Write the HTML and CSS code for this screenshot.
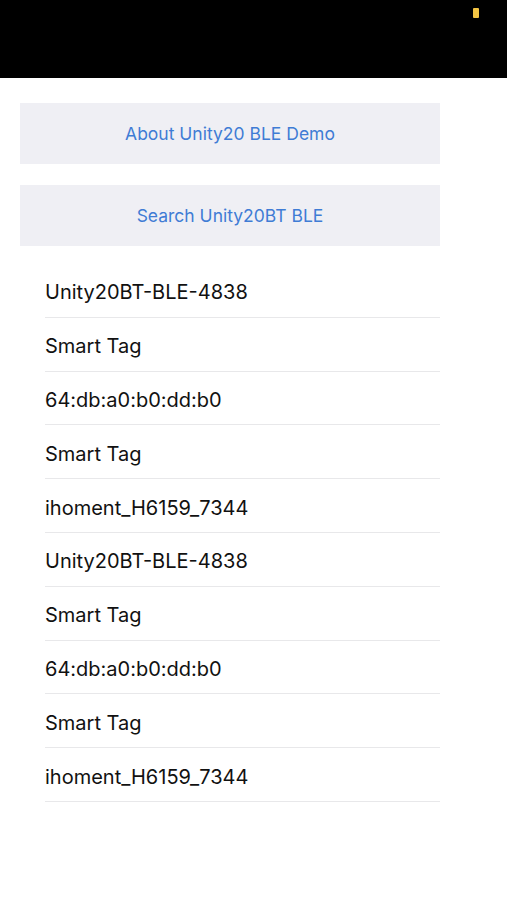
FILE: index.html
```html
<!DOCTYPE html>
<html lang="en">
<head>
    <title>Unity20 BLE Demo</title>
    <meta charset="UTF-8">
    <link rel="stylesheet" href="styles.css">
</head>
<body>
<!-- Status bar -->
<div class="status-bar">
    <span class="battery"></span>
</div>

<div class="content">
    <button class="action">About Unity20 BLE Demo</button>
    <button class="action">Search Unity20BT BLE</button>

    <!-- Found devices -->
    <ul class="device-list">
        <li><span>Unity20BT-BLE-4838</span></li>
        <li><span>Smart Tag</span></li>
        <li><span>64:db:a0:b0:dd:b0</span></li>
        <li><span>Smart Tag</span></li>
        <li><span>ihoment_H6159_7344</span></li>
        <li><span>Unity20BT-BLE-4838</span></li>
        <li><span>Smart Tag</span></li>
        <li><span>64:db:a0:b0:dd:b0</span></li>
        <li><span>Smart Tag</span></li>
        <li><span>ihoment_H6159_7344</span></li>
    </ul>
</div>
</body>
</html>
```

FILE: styles.css
```css
body { margin: 0; background: #fff; font-family: Inter, "Liberation Sans", Arial, sans-serif; }
.status-bar { height: 78px; background: #000; position: relative; }
.battery { position: absolute; left: 473px; top: 8px; width: 6px; height: 10px; background: #f3c443; border-radius: 1px; }
.content { width: 420px; margin-left: 20px; padding-top: 25px; }
.action { display: block; width: 100%; height: 61px; margin-bottom: 21px; border: none; background: #efeff4; color: #3f7cd5; font-family: inherit; font-size: 17.5px; cursor: pointer; }
.device-list { list-style: none; margin: -3px 0 0; padding: 0 0 0 25px; }
.device-list li { height: 53.8px; box-sizing: border-box; border-bottom: 1px solid #e8e8ea; display: flex; align-items: center; padding-top: 4px; font-size: 20px; color: #111; }
```
